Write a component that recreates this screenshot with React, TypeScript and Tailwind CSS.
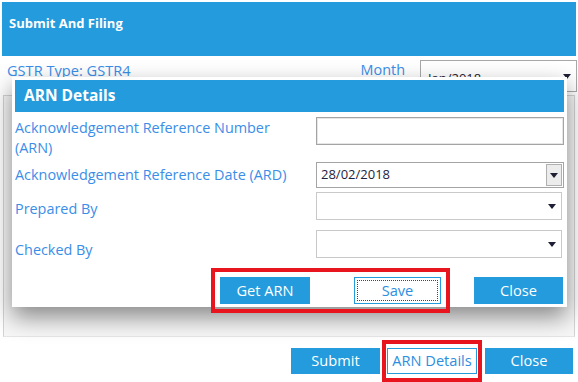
function Caret({ className = '' }: { className?: string }) {
  return (
    <svg width="8" height="5" viewBox="0 0 8 5" className={className} aria-hidden="true">
      <path d="M0 0h8L4 5z" fill="#1e1e34" />
    </svg>
  );
}

function Field({ label, children, labelTop = 0, className = '' }: {
  label: React.ReactNode;
  children: React.ReactNode;
  labelTop?: number;
  className?: string;
}) {
  return (
    <div className={`flex items-start ${className}`}>
      <div className="flex-1 text-[14.4px] leading-[20px] text-[#3a8ee8]" style={{ paddingTop: labelTop }}>
        {label}
      </div>
      {children}
    </div>
  );
}

function DropBox() {
  return (
    <div className="w-[246px] h-[28px] mr-[2px] border border-[#c9c9c9] bg-white flex items-center justify-end pr-[5px]">
      <Caret />
    </div>
  );
}

export default function App() {
  return (
    <div className="relative w-[578px] h-[382px] overflow-hidden bg-white font-['Open_Sans',sans-serif]">
      {/* Page header */}
      <div className="mx-[2px] mt-[2px] h-[54px] bg-[#239bdc] pl-[7px] pt-[8px]">
        <span className="text-[13px] font-bold leading-[20px] text-white">Submit And Filing</span>
      </div>

      {/* GSTR row */}
      <div className="flex items-start pl-[7px] pr-[1px] mt-[4px] h-[32px]">
        <span className="text-[14.6px] leading-[20px] text-[#3a8ee8]">GSTR Type: GSTR4</span>
        <span className="ml-auto mr-[15px] text-[14.4px] leading-[20px] text-[#3a8ee8]">Month</span>
        <div className="w-[157px] h-[32px] border border-[#a8a8a8] bg-white flex items-center pl-[7px] pr-[5px]">
          <span className="text-[13px] text-[#1e1e34] pt-[6px]">Jan/2018</span>
          <Caret className="ml-auto" />
        </div>
      </div>

      {/* Panel behind dialog */}
      <div className="mx-[3px] mt-[3px] h-[242px] border border-[#d4d4d4] border-b-[#e6e6e6] bg-[#f7f7f7]" />

      {/* Bottom buttons */}
      <div className="flex justify-end items-center pr-[5px] mt-[11px] text-[14.6px]">
        <button className="w-[89px] h-[26px] bg-[#239bdc] text-white">Submit</button>
        <div className="ml-[7px] py-[3px] -my-[3px] outline-4 outline-solid outline-[#e8141e] outline-offset-[1px]">
          <button className="w-[90px] h-[26px] bg-white border border-[#239bdc] text-[#2d8ee0]">ARN Details</button>
        </div>
        <button className="ml-[8px] w-[88px] h-[26px] bg-[#239bdc] text-white">Close</button>
      </div>

      {/* ARN dialog */}
      <div className="absolute left-[12px] top-[77px] w-[555px] h-[230px] bg-white p-[3px] shadow-[0_10px_22px_rgba(0,0,0,0.45)]">
        <div className="h-[32px] bg-[#239bdc] pl-[9px] flex items-center">
          <span className="text-[15.5px] font-bold text-white">ARN Details</span>
        </div>

        <Field className="mt-[5px]" labelTop={1} label={<>Acknowledgement Reference Number<br />(ARN)</>}>
          <div className="w-[248px] h-[28px] border border-[#a4a4a4] bg-white shadow-[inset_0_0_0_1px_#e6e6e6]" />
        </Field>

        <Field className="mt-[4px]" labelTop={3} label="Acknowledgement Reference Date (ARD)">
          <div className="w-[248px] h-[26px] border border-[#a4a4a4] bg-white flex items-center pl-[4px] pr-[1px]">
            <span className="text-[13px] text-[#1e1e40]">28/02/2018</span>
            <div className="ml-auto w-[16px] h-[22px] bg-[#ececec] border border-[#b0b0b0] flex items-center justify-center">
              <Caret />
            </div>
          </div>
        </Field>

        <Field className="mt-[4px]" labelTop={7} label="Prepared By">
          <DropBox />
        </Field>

        <Field className="mt-[10px]" labelTop={10} label="Checked By">
          <DropBox />
        </Field>

        <div className="flex justify-end items-center mt-[17px] pr-[1px] text-[14.6px]">
          <div className="flex items-center outline-4 outline-solid outline-[#e8141e] outline-offset-[5px]">
            <button className="w-[90px] h-[27px] bg-[#239bdc] text-white">Get ARN</button>
            <button className="ml-[44px] w-[87px] h-[27px] bg-white border border-[#239bdc] p-[2px]">
              <span className="flex items-center justify-center h-full border border-dotted border-[#1c4f8a] text-[#2d8ee0]">Save</span>
            </button>
          </div>
          <button className="ml-[33px] w-[89px] h-[27px] bg-[#239bdc] text-white">Close</button>
        </div>
      </div>
    </div>
  );
}
